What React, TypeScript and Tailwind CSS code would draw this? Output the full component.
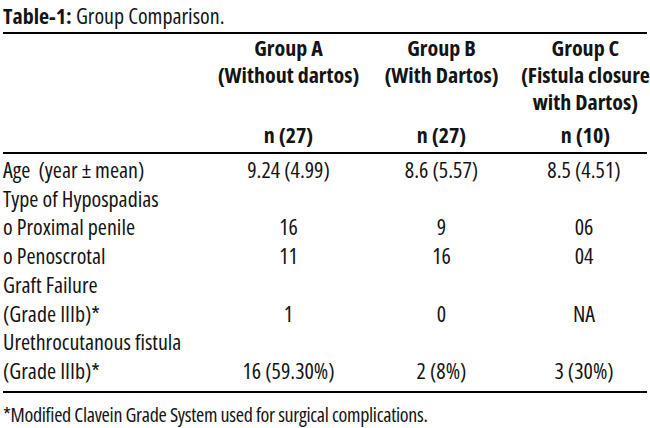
const rows: { label: string; a: string; b: string; c: string }[] = [
  { label: "Age  (year ± mean)", a: "9.24 (4.99)", b: "8.6 (5.57)", c: "8.5 (4.51)" },
  { label: "Type of Hypospadias", a: "", b: "", c: "" },
  { label: "o Proximal penile", a: "16", b: "9", c: "06" },
  { label: "o Penoscrotal", a: "11", b: "16", c: "04" },
  { label: "Graft Failure", a: "", b: "", c: "" },
  { label: "(Grade IIIb)*", a: "1", b: "0", c: "NA" },
  { label: "Urethrocutanous fistula", a: "", b: "", c: "" },
  { label: "(Grade IIIb)*", a: "16 (59.30%)", b: "2 (8%)", c: "3 (30%)" },
];

const cols = "grid grid-cols-[212px_147px_159px_1fr]";

export default function App() {
  return (
    <div className="w-[650px] h-[428px] bg-white text-[#141414] font-['Open_Sans',sans-serif] font-stretch-condensed text-[22px] overflow-hidden">
      <div className="px-[3px] h-[32px] leading-[30px] whitespace-nowrap">
        <span className="font-bold">Table-1:</span> Group Comparison.
      </div>

      <div className="mx-[3px] border-t-2 border-b-2 border-black">
        {/* header */}
        <div className={`${cols} font-bold leading-[27px] pb-[4px] whitespace-nowrap`}>
          <div />
          <div className="text-center">Group A</div>
          <div className="text-center">Group B</div>
          <div className="text-center">Group C</div>
          <div />
          <div className="text-center">(Without dartos)</div>
          <div className="text-center">(With Dartos)</div>
          <div className="text-center">(Fistula closure</div>
          <div />
          <div />
          <div />
          <div className="text-center">with Dartos)</div>
          <div className="mt-[6px]" />
          <div className="mt-[6px] text-center">n (27)</div>
          <div className="mt-[6px] text-center">n (27)</div>
          <div className="mt-[6px] text-center">n (10)</div>
        </div>
      </div>

      <div className="mx-[3px] -mt-[2px] border-b-2 border-black pt-[3px] pb-[6px]">
        {rows.map((r, i) => (
          <div key={i} className={`${cols} leading-[28.7px] whitespace-pre`}>
            <div>{r.label}</div>
            <div className="text-center">{r.a}</div>
            <div className="text-center">{r.b}</div>
            <div className="text-center">{r.c}</div>
          </div>
        ))}
      </div>

      <div className="px-[3px] pt-[8px] leading-[28px] text-[20px] tracking-[-0.3px] whitespace-nowrap">
        *Modified Clavein Grade System used for surgical complications.
      </div>
    </div>
  );
}
